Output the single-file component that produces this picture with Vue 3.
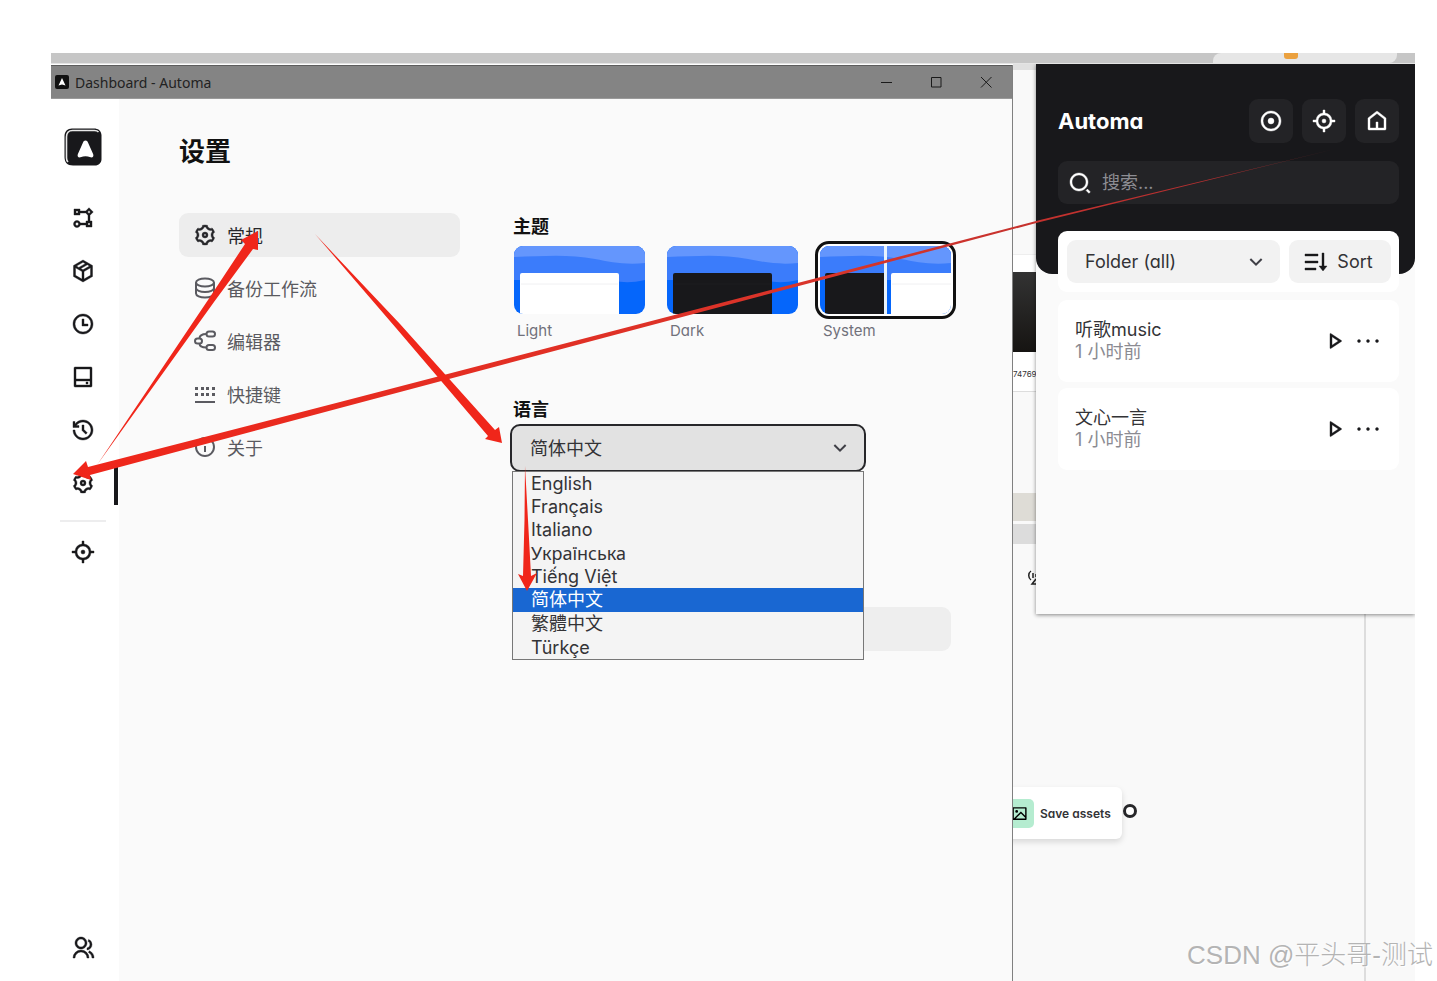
<script setup>
import { ref } from 'vue'

const icons = {
  flow: 'M6 21.5C4.067 21.5 2.5 19.933 2.5 18S4.067 14.5 6 14.5c1.585 0 2.924 1.054 3.355 2.5H15v-2h2V9.242L14.757 7H9v2H3V3h6v2h5.757L18 1.756 22.243 6 19 9.241V15h2v6h-6v-2H9.355c-.43 1.446-1.77 2.5-3.355 2.5zm0-5c-.828 0-1.5.672-1.5 1.5s.672 1.5 1.5 1.5 1.5-.672 1.5-1.5-.672-1.5-1.5-1.5zm13 .5h-2v2h2v-2zM18 4.586L16.586 6 18 7.414 19.414 6 18 4.586zM7 5H5v2h2V5z',
  box: 'M12 1l9.5 5.5v11L12 23l-9.5-5.5v-11L12 1zM5.494 7.078l2.3 1.33L14.3 4.64 12 3.311 5.494 7.078zM16.3 5.8L9.8 9.57l2.2 1.27 6.506-3.766L16.3 5.8zM4.5 8.813v7.534L11 20.11v-7.533L4.5 8.813zM13 20.11l6.5-3.763V8.81L13 12.577v7.533z',
  clock: 'M12 22C6.477 22 2 17.523 2 12S6.477 2 12 2s10 4.477 10 10-4.477 10-10 10zm0-2a8 8 0 1 0 0-16 8 8 0 0 0 0 16zm1-8h4v2h-6V7h2v5z',
  drive: 'M5 14h14V4H5v10zm0 2v4h14v-4H5zM4 2h16a1 1 0 0 1 1 1v18a1 1 0 0 1-1 1H4a1 1 0 0 1-1-1V3a1 1 0 0 1 1-1zm11 15h2v2h-2v-2z',
  history: 'M12 2c5.523 0 10 4.477 10 10s-4.477 10-10 10S2 17.523 2 12h2c0 4.418 3.582 8 8 8s8-3.582 8-8-3.582-8-8-8C9.25 4 6.824 5.387 5.385 7.5H8v2H2v-6h2V6c1.824-2.43 4.729-4 8-4zm1 5v4.585l3.243 3.243-1.415 1.415L11 12.413V7h2z',
  settings: 'M3.34 17a10.018 10.018 0 0 1-.978-2.326 3 3 0 0 0 .002-5.347A9.99 9.99 0 0 1 4.865 4.99a3 3 0 0 0 4.631-2.674 9.99 9.99 0 0 1 5.007.002 3 3 0 0 0 4.632 2.672c.579.59 1.093 1.261 1.525 2.01.433.749.757 1.53.978 2.326a3 3 0 0 0-.002 5.347 9.99 9.99 0 0 1-2.501 4.337 3 3 0 0 0-4.631 2.674 9.99 9.99 0 0 1-5.007-.002 3 3 0 0 0-4.632-2.672A10.018 10.018 0 0 1 3.34 17zm5.66.196a4.993 4.993 0 0 1 2.25 2.77c.499.047 1 .048 1.499.001A4.993 4.993 0 0 1 15 17.197a4.993 4.993 0 0 1 3.525-.565c.29-.408.54-.843.748-1.298A4.993 4.993 0 0 1 18 12c0-1.26.47-2.437 1.273-3.334a8.126 8.126 0 0 0-.75-1.298A4.993 4.993 0 0 1 15 6.804a4.993 4.993 0 0 1-2.25-2.77c-.499-.047-1-.048-1.499-.001A4.993 4.993 0 0 1 9 6.803a4.993 4.993 0 0 1-3.525.565 7.99 7.99 0 0 0-.748 1.298A4.993 4.993 0 0 1 6 12c0 1.26-.47 2.437-1.273 3.334a8.126 8.126 0 0 0 .75 1.298A4.993 4.993 0 0 1 9 17.196zM12 15a3 3 0 1 1 0-6 3 3 0 0 1 0 6zm0-2a1 1 0 1 0 0-2 1 1 0 0 0 0 2z',
  focus: 'M13 1l.001 3.062A8.004 8.004 0 0 1 19.938 11H23v2l-3.062.001a8.004 8.004 0 0 1-6.937 6.937L13 23h-2v-3.062a8.004 8.004 0 0 1-6.938-6.937L1 13v-2h3.062A8.004 8.004 0 0 1 11 4.062V1h2zm-1 5a6 6 0 1 0 0 12 6 6 0 0 0 0-12zm0 4a2 2 0 1 1 0 4 2 2 0 0 1 0-4z',
  group: 'M2 22a8 8 0 1 1 16 0h-2a6 6 0 1 0-12 0H2zm8-9c-3.315 0-6-2.685-6-6s2.685-6 6-6 6 2.685 6 6-2.685 6-6 6zm0-2c2.21 0 4-1.79 4-4s-1.79-4-4-4-4 1.79-4 4 1.79 4 4 4zm8.284 3.703A8.002 8.002 0 0 1 23 22h-2a6.001 6.001 0 0 0-3.537-5.473l.82-1.824zm-.688-11.29A5.5 5.5 0 0 1 21 8.5a5.499 5.499 0 0 1-5 5.478v-2.013a3.5 3.5 0 0 0 1.041-6.609l.555-1.943z',
  keyboard: 'M2 19h20v2H2v-2zm0-8h3v3H2v-3zm6 0h3v3H8v-3zM2 5h3v3H2V5zm11 0h3v3h-3V5zm6 0h3v3h-3V5zm-6 6h3v3h-3v-3zm6 0h3v3h-3v-3zM8 5h3v3H8V5z',
  info: 'M12 22C6.477 22 2 17.523 2 12S6.477 2 12 2s10 4.477 10 10-4.477 10-10 10zm0-2a8 8 0 1 0 0-16 8 8 0 0 0 0 16zM11 7h2v2h-2V7zm0 4h2v6h-2v-6z',
  record: 'M12 22C6.477 22 2 17.523 2 12S6.477 2 12 2s10 4.477 10 10-4.477 10-10 10zm0-2a8 8 0 1 0 0-16 8 8 0 0 0 0 16zm0-5a3 3 0 1 1 0-6 3 3 0 0 1 0 6z',
  home: 'M13 19h6V9.978l-7-5.444-7 5.444V19h6v-6h2v6zm8 1a1 1 0 0 1-1 1H4a1 1 0 0 1-1-1V9.49a1 1 0 0 1 .386-.79l8-6.222a1 1 0 0 1 1.228 0l8 6.222a1 1 0 0 1 .386.79V20z',
  search: 'M11 2c4.968 0 9 4.032 9 9s-4.032 9-9 9-9-4.032-9-9 4.032-9 9-9zm0 16c3.867 0 7-3.133 7-7 0-3.868-3.133-7-7-7-3.868 0-7 3.132-7 7 0 3.867 3.132 7 7 7zm8.485.071l2.829 2.828-1.415 1.415-2.828-2.829 1.414-1.414z',
  sort: 'M20 3v13h3l-4 5-4-5h3V3h2zm-8 15v2H1v-2h11zm2-7v2H1v-2h13zm0-7v2H1V4h13z',
  play: 'M16.394 12L10 7.737v8.526L16.394 12zm2.982.416L8.777 19.482A.5.5 0 0 1 8 19.066V4.934a.5.5 0 0 1 .777-.416l10.599 7.066a.5.5 0 0 1 0 .832z',
  more: 'M3 10.500a1.500 1.500 0 1 0 0 3 1.500 1.500 0 0 0 0-3zm9 0a1.500 1.500 0 1 0 0 3 1.500 1.500 0 0 0 0-3zm9 0a1.500 1.500 0 1 0 0 3 1.500 1.500 0 0 0 0-3z',
  arrowDown: 'M12 13.172l4.95-4.95 1.414 1.414L12 16 5.636 9.636 7.05 8.222z',
  image: 'M4.828 21l-.02.02-.021-.02H2.992A.993.993 0 0 1 2 20.007V3.993A1 1 0 0 1 2.992 3h18.016c.548 0 .992.445.992.993v16.014a1 1 0 0 1-.992.993H4.828zM20 15V5H4v14L14 9l6 6zm0 2.828l-6-6L6.828 19H20v-1.172zM8 11a2 2 0 1 1 0-4 2 2 0 0 1 0 4z'
}

const navs = [
  { id: 'workflows', icon: 'flow' },
  { id: 'packages', icon: 'box' },
  { id: 'schedule', icon: 'clock' },
  { id: 'storage', icon: 'drive' },
  { id: 'logs', icon: 'history' },
  { id: 'settings', icon: 'settings' }
]

const menus = [
  { id: 'general', name: '常规', icon: 'settings' },
  { id: 'backup', name: '备份工作流' },
  { id: 'editor', name: '编辑器' },
  { id: 'shortcuts', name: '快捷键', icon: 'keyboard' },
  { id: 'about', name: '关于', icon: 'info' }
]
const activeMenu = ref('general')

const themes = [
  { id: 'light', name: 'Light' },
  { id: 'dark', name: 'Dark' },
  { id: 'system', name: 'System' }
]
const theme = ref('system')

const languages = [
  { id: 'en', name: 'English' },
  { id: 'fr', name: 'Français' },
  { id: 'it', name: 'Italiano' },
  { id: 'uk', name: 'Українська' },
  { id: 'vi', name: 'Tiếng Việt' },
  { id: 'zh', name: '简体中文' },
  { id: 'zh-TW', name: '繁體中文' },
  { id: 'tr', name: 'Türkçe' }
]
const language = ref('zh')
const showList = ref(true)

let pickLanguage = (id) => {
  language.value = id
  showList.value = false
}

const folder = ref('all')
const query = ref('')
const workflows = [
  { name: '听歌music', time: '1 小时前' },
  { name: '文心一言', time: '1 小时前' }
]
</script>

<template>
  <div class="page">
    <div class="tabstrip">
      <div class="tab"><span class="favicon"></span></div>
    </div>
    <div class="desktop">
      <section class="window">
        <header class="titlebar">
          <svg class="title-logo" viewBox="0 0 14 14"><rect width="14" height="14" rx="2" fill="#111" /><path d="M7 3l3.500 7.500L7 9.500l-3.500 1z" fill="#fff" /></svg>
          <span class="title">Dashboard - Automa</span>
          <button class="win-btn" aria-label="minimize"><svg viewBox="0 0 12 12"><path d="M1 6.500h11" /></svg></button>
          <button class="win-btn" aria-label="maximize"><svg viewBox="0 0 12 12"><path d="M1.500 1.500h9.500v9.500h-9.500z" /></svg></button>
          <button class="win-btn" aria-label="close"><svg viewBox="0 0 12 12"><path d="M1 1l10.500 10.500M11.500 1L1 11.500" /></svg></button>
        </header>
        <div class="window-body">
          <aside class="sidebar">
            <svg class="logo" viewBox="0 0 38 38">
              <path d="M8 .5h22c4 0 7 2 7.500 6.500V31c0 4-3 6.500-6.500 6.500H9C3 37.500.5 34 .5 29V8C.5 3.500 3.500.5 8 .5z" fill="#18181b" />
              <path d="M4 34c-1-1-1.500-2-1.500-4V9c0-4 2-6.500 6-6.500h22c2 0 3 .5 4 1.500" fill="none" stroke="#e8e8e8" stroke-width="1.600" />
              <path d="M21.500 12.500c-1.300 0-2 .8-2.600 2.200l-5 11.300c-1 2.200.5 4 2.600 3.300 3.600-1.300 6.400-1.300 10 0 2.100.7 3.600-1.100 2.600-3.300l-5-11.300c-.6-1.400-1.300-2.200-2.600-2.200z" fill="#fff" />
            </svg>
            <nav class="navs">
              <a v-for="item in navs" :key="item.id" :href="'#/' + item.id" :aria-label="item.id" class="nav" :class="{ active: item.id === 'settings' }">
                <svg class="icon" viewBox="0 0 24 24"><path :d="icons[item.icon]" /></svg>
              </a>
            </nav>
            <hr class="divider">
            <button class="nav" aria-label="element selector">
              <svg class="icon" viewBox="0 0 24 24"><path :d="icons.focus" /></svg>
            </button>
            <a href="#/community" class="nav bottom" aria-label="community">
              <svg class="icon" viewBox="0 0 24 24"><path :d="icons.group" /></svg>
            </a>
          </aside>

          <main class="main">
            <h1>设置</h1>
            <div class="columns">
              <nav class="menu">
                <a v-for="item in menus" :key="item.id" :href="'#' + item.id" class="menu-item" :class="{ active: activeMenu === item.id }" @click="activeMenu = item.id">
                  <svg v-if="item.icon" class="icon" viewBox="0 0 24 24"><path :d="icons[item.icon]" /></svg>
                  <svg v-else-if="item.id === 'backup'" class="icon line" viewBox="0 0 24 24">
                    <ellipse cx="12" cy="6.500" rx="9" ry="4" />
                    <path d="M3 6.500v11c0 2.200 4 4 9 4s9-1.800 9-4v-11M3 12c0 2.200 4 4 9 4s9-1.800 9-4" />
                  </svg>
                  <svg v-else class="icon line" viewBox="0 0 24 24">
                    <rect x="13.500" y="2.500" width="8.500" height="5" rx="2.500" />
                    <rect x="2" y="9.500" width="7" height="5" rx="2.500" />
                    <rect x="13.500" y="16" width="8.500" height="5" rx="2.500" />
                    <path d="M13.500 5c-4 0-7 .5-7 4.500M6.500 14.500c0 3.500 3 4 7 4" />
                  </svg>
                  <span>{{ item.name }}</span>
                </a>
              </nav>

              <div class="content">
                <h2 id="theme-label">主题</h2>
                <div class="themes" role="radiogroup" aria-labelledby="theme-label">
                  <label v-for="item in themes" :key="item.id" class="theme">
                    <input v-model="theme" type="radio" name="theme" :value="item.id">
                    <span class="thumb">
                      <svg viewBox="0 0 131 68">
                        <rect width="131" height="68" fill="#0566fb" />
                        <path d="M0 0h131v34c-14 3-22 3-32 0H0z" fill="#3b7cfb" />
                        <path d="M0 0h131v17c-20 2-35-1-50-4C55 8 30 10 0 11z" fill="#6496fd" />
                        <g v-if="item.id !== 'system'">
                          <path d="M6 68V29q0-2 2-2h95q2 0 2 2v39z" :fill="item.id === 'dark' ? '#18181b' : '#fff'" />
                          <path d="M7 38h97" :stroke="item.id === 'dark' ? '#1c1c20' : '#f0f0f2'" />
                        </g>
                        <g v-else>
                          <path d="M5 68V29q0-2 2-2h57v41z" fill="#18181b" />
                          <path d="M71 68V29q0-2 2-2h58v41z" fill="#fff" />
                          <path d="M72 38h59" stroke="#f0f0f2" />
                          <rect x="64" width="3" height="68" fill="#e8f3fc" />
                        </g>
                      </svg>
                    </span>
                    <span class="theme-name">{{ item.name }}</span>
                  </label>
                </div>

                <h2 class="lang-title"><label for="language">语言</label></h2>
                <div class="lang">
                  <select id="language" v-model="language" @mousedown.prevent="showList = !showList">
                    <option v-for="item in languages" :key="item.id" :value="item.id">{{ item.name }}</option>
                  </select>
                  <svg class="caret" viewBox="0 0 24 24"><path :d="icons.arrowDown" /></svg>
                  <ul v-if="showList" class="lang-list" role="listbox">
                    <li v-for="item in languages" :key="item.id" role="option" :lang="item.id" :aria-selected="language === item.id" @click="pickLanguage(item.id)">{{ item.name }}</li>
                  </ul>
                </div>
                <div class="placeholder"></div>
              </div>
            </div>
          </main>
        </div>
      </section>

      <section class="editor">
        <!-- what is left of the workflow canvas behind the windows -->
        <div class="piece edge"></div>
        <div class="piece toolbar"></div>
        <div class="piece photo"></div>
        <div class="piece caption">74769</div>
        <div class="piece stripe"></div>
        <div class="piece stripe second"></div>
        <svg class="piece signal" viewBox="0 0 8 16"><path d="M3 1C0 3 0 8 3 10M5 3v5M8 4v3M8 9l-4 5h4" fill="none" stroke="#222" stroke-width="1.500" /></svg>
        <div class="piece guide"></div>
        <div class="node">
          <span class="node-icon"><svg viewBox="0 0 24 24"><path :d="icons.image" /></svg></span>
          <span>Save assets</span>
          <i class="handle"></i>
        </div>

        <div class="popup">
          <header class="popup-head">
            <div class="popup-row">
              <strong>Automa</strong>
              <button v-for="name in ['record', 'focus', 'home']" :key="name" class="dark-btn" :aria-label="name">
                <svg class="icon" viewBox="0 0 24 24"><path :d="icons[name]" /></svg>
              </button>
            </div>
            <label class="search">
              <svg class="icon" viewBox="0 0 24 24"><path :d="icons.search" /></svg>
              <input v-model="query" type="text" placeholder="搜索..." aria-label="搜索">
            </label>
          </header>
          <div class="popup-body">
            <div class="filters">
              <div class="folder">
                <select v-model="folder" aria-label="Folder">
                  <option value="all">Folder (all)</option>
                </select>
                <svg class="caret" viewBox="0 0 24 24"><path :d="icons.arrowDown" /></svg>
              </div>
              <button class="sort">
                <svg class="icon" viewBox="0 0 24 24"><path :d="icons.sort" /></svg>
                <span>Sort</span>
              </button>
            </div>
            <article v-for="item in workflows" :key="item.name" class="card">
              <div class="card-text">
                <p>{{ item.name }}</p>
                <p class="time">{{ item.time }}</p>
              </div>
              <button aria-label="run"><svg class="icon" viewBox="0 0 24 24"><path :d="icons.play" /></svg></button>
              <button aria-label="more"><svg class="icon" viewBox="0 0 24 24"><path :d="icons.more" /></svg></button>
            </article>
          </div>
        </div>
      </section>
    </div>

    <!-- red guide arrows -->
    <svg class="arrows">
      <defs>
        <linearGradient id="fade" gradientUnits="userSpaceOnUse" x1="73" y1="474" x2="1335" y2="149">
          <stop offset="0" stop-color="#f0261a" />
          <stop offset="0.600" stop-color="#d8352b" />
          <stop offset="0.900" stop-color="#b52f30" />
          <stop offset="1" stop-color="#702527" />
        </linearGradient>
      </defs>
      <path fill="url(#fade)" d="M73 474L86 461 88 467 340 402 1040 220 1335 149 1040 222 340 408 90 475 91 480z" />
      <path d="M258 231L241 240 245 244 208 300 97 465 214 302 253 249 258 250z" />
      <path d="M502 443L499 427 495 430 400 324 315 234 396 328 488 436 485 439z" />
      <path d="M527 591L518 574 523 576 524.500 520 525 466 528 520 531 576 537 573z" />
    </svg>
    <div class="watermark">CSDN @平头哥-测试</div>
  </div>
</template>

<style>
body {
  background: #fff;
}
</style>

<style scoped>
* {
  box-sizing: border-box;
}
.page {
  position: relative;
  display: flex;
  flex-direction: column;
  min-height: 100vh;
  padding: 53px 22px 0 51px;
  overflow: hidden;
  font-family: Inter, "Noto Sans CJK SC", sans-serif;
  font-feature-settings: "cv11";
  font-size: 18px;
  color: #333336;
}
h1, h2, p, ul {
  margin: 0;
  padding: 0;
}
button, select, input {
  font: inherit;
  font-feature-settings: inherit;
  color: inherit;
  border: 0;
  padding: 0;
  background: none;
}
a {
  color: inherit;
  text-decoration: none;
}
svg {
  display: block;
}
.icon {
  width: 24px;
  height: 24px;
  flex: none;
  fill: currentColor;
  stroke: currentColor;
  stroke-width: 0.400;
}
.icon.line {
  fill: none;
  stroke-width: 2;
}

.tabstrip {
  display: flex;
  justify-content: flex-end;
  height: 11px;
  background: #c6c6c6;
  border-bottom: 1px solid #e4e4e4;
}
.tab {
  width: 184px;
  margin-right: 18px;
  padding-left: 54px;
  border-radius: 8px 0 8px 0;
  background: #e6e6e6;
}
.favicon {
  display: block;
  width: 14px;
  height: 6px;
  margin-left: 17px;
  border-radius: 0 0 3px 3px;
  background: #eba13f;
}
.desktop {
  display: flex;
  flex: 1;
}

.window {
  display: flex;
  flex-direction: column;
  flex: 1;
  min-width: 0;
  margin-top: 1px;
  border-right: 1px solid #808080;
  background: #fafafa;
}
.titlebar {
  display: flex;
  align-items: center;
  height: 34px;
  padding: 0 1px 0 4px;
  background: #848484;
  border-top: 1px solid #5d5d5d;
  border-bottom: 1px solid #9a9a9a;
}
.title-logo {
  width: 14px;
  height: 14px;
}
.title {
  flex: 1;
  margin-left: 6px;
  font-family: "Noto Sans", "Noto Sans CJK SC", sans-serif;
  font-size: 14px;
  color: #222;
}
.win-btn {
  display: flex;
  align-items: center;
  justify-content: center;
  width: 50px;
  height: 32px;
}
.win-btn svg {
  width: 12px;
  height: 12px;
  fill: none;
  stroke: #1a1a1a;
}
.window-body {
  display: flex;
  flex: 1;
}
.sidebar {
  display: flex;
  flex-direction: column;
  flex: none;
  align-items: center;
  width: 68px;
  padding: 29px 4px 11px 0;
  background: #fff;
  color: #18181b;
}
.logo {
  width: 38px;
  height: 38px;
  margin-bottom: 30px;
}
.navs {
  display: flex;
  flex-direction: column;
  gap: 9px;
  width: 100%;
}
.nav {
  position: relative;
  display: flex;
  align-items: center;
  justify-content: center;
  width: 100%;
  height: 44px;
}
.nav.active::after {
  content: "";
  position: absolute;
  right: -3px;
  width: 4px;
  height: 44px;
  background: #18181b;
}
.nav.bottom {
  margin-top: auto;
}
.divider {
  width: 46px;
  height: 2px;
  margin: 15px 0 8px;
  border: 0;
  background: #ededee;
}

.main {
  flex: 1;
  min-width: 0;
  padding: 36px 61px 0 60px;
}
h1 {
  margin-bottom: 44px;
  font-size: 26px;
  line-height: 34px;
  color: #111;
}
.columns {
  display: flex;
  gap: 53px;
}
.menu {
  display: flex;
  flex-direction: column;
  flex: none;
  gap: 9px;
  width: 281px;
}
.menu-item {
  display: flex;
  align-items: center;
  gap: 10px;
  height: 44px;
  padding: 0 14px;
  border-radius: 9px;
  color: #5a5a60;
}
.menu-item.active {
  background: #ededed;
  color: #27272a;
}
.menu-item:not(.active) .icon:not(.line) {
  stroke: none;
}
.content {
  flex: 1;
  min-width: 0;
}
h2 {
  font-size: 18px;
  line-height: 28px;
  color: #111;
}
.themes {
  display: flex;
  gap: 12px;
  margin-left: -4px;
}
.theme {
  position: relative;
  flex: none;
  width: 141px;
}
.theme input {
  position: absolute;
  inset: 0;
  margin: 0;
  opacity: 0;
}
.thumb {
  display: block;
  padding: 2px;
  border: 3px solid transparent;
  border-radius: 14px;
}
.thumb svg {
  width: 100%;
  border-radius: 9px;
}
.theme input:checked + .thumb {
  border-color: #111;
  background: #fff;
}
.theme-name {
  display: block;
  padding-left: 8px;
  font-size: 15px;
  line-height: 24px;
  color: #71717a;
}
.lang-title {
  margin-top: 53px;
}
.lang {
  position: relative;
  width: 356px;
  margin-left: -3px;
}
.lang select {
  appearance: none;
  width: 100%;
  height: 48px;
  padding: 0 18px;
  border: 2px solid #27272a;
  border-radius: 10px;
  background: #e2e2e2;
  outline: 0;
}
.caret {
  position: absolute;
  top: 50%;
  right: 14px;
  width: 24px;
  height: 24px;
  margin-top: -12px;
  fill: #3f3f46;
  pointer-events: none;
}
.lang-list {
  position: absolute;
  top: 47px;
  left: 2px;
  right: 2px;
  border: 1px solid #777;
  background: #f4f4f4;
  list-style: none;
  font-feature-settings: normal;
}
.lang-list li {
  height: 23px;
  padding-left: 18px;
  line-height: 23px;
}
.lang-list li:lang(zh), .lang-list li:lang(uk) {
  height: 24px;
  line-height: 24px;
}
.lang-list li:lang(uk) {
  font-family: "Noto Sans", sans-serif;
}
.lang-list li[aria-selected="true"] {
  background: #1967d2;
  color: #fff;
}
.placeholder {
  height: 44px;
  margin-top: 135px;
  border-radius: 9px;
  background: #eee;
}

.editor {
  position: relative;
  flex: none;
  width: 402px;
  background: #f9f9f9;
  overflow: hidden;
}
.piece {
  position: absolute;
  left: 0;
}
.edge {
  top: 0;
  width: 100%;
  height: 6px;
  background: #e0e0e0;
}
.toolbar {
  top: 190px;
  width: 100%;
  height: 138px;
  border-top: 1px solid #eee;
  border-bottom: 1px solid #ddd;
  background: #fff;
}
.photo {
  top: 208px;
  width: 23px;
  height: 80px;
  background: linear-gradient(#333, #161412);
}
.caption {
  top: 304px;
  font-size: 8px;
  line-height: 12px;
}
.stripe {
  top: 429px;
  width: 23px;
  height: 28px;
  background: #dedcd6;
}
.stripe.second {
  top: 460px;
  height: 20px;
  background: #dcdcdc;
}
.signal {
  top: 506px;
  left: 15px;
  width: 8px;
  height: 16px;
}
.guide {
  top: 550px;
  bottom: 0;
  left: 351px;
  width: 2px;
  background: #ddd;
}
.node {
  position: absolute;
  top: 723px;
  left: -8px;
  display: flex;
  align-items: center;
  gap: 6px;
  width: 117px;
  height: 52px;
  border-radius: 6px;
  background: #fff;
  box-shadow: 0 3px 6px #0002;
  font-size: 12px;
  font-weight: 600;
  white-space: nowrap;
}
.node-icon {
  padding: 6px;
  border-radius: 5px;
  background: #b5ecd0;
}
.node-icon svg {
  width: 17px;
  height: 17px;
}
.handle {
  position: absolute;
  top: 17px;
  right: -15px;
  width: 14px;
  height: 14px;
  border: 3px solid #27272a;
  border-radius: 50%;
  background: #fff;
}

.popup {
  position: absolute;
  top: 0;
  left: 23px;
  right: 0;
  height: 550px;
  background: #fafafa;
  box-shadow: 0 1px 4px #0007;
}
.popup-head {
  padding: 35px 16px 70px 22px;
  border-radius: 0 0 16px 16px;
  background: #18181b;
  color: #fff;
}
.popup-row {
  display: flex;
  align-items: center;
  gap: 9px;
  margin-bottom: 18px;
}
.popup-row strong {
  flex: 1;
  font-size: 22px;
}
.dark-btn {
  display: flex;
  align-items: center;
  justify-content: center;
  width: 44px;
  height: 44px;
  border-radius: 9px;
  background: #232326;
}
.search {
  display: flex;
  align-items: center;
  gap: 10px;
  height: 43px;
  padding: 0 10px;
  border-radius: 9px;
  background: #232326;
}
.search input {
  flex: 1;
  min-width: 0;
  outline: 0;
}
.search input::placeholder {
  color: #8d8d93;
}
.popup-body {
  display: flex;
  flex-direction: column;
  gap: 6px;
  margin-top: -43px;
  padding: 0 16px 0 22px;
}
.filters {
  display: flex;
  gap: 9px;
  margin-bottom: 2px;
  padding: 9px 8px 9px 9px;
  border-radius: 9px;
  background: #fff;
}
.folder {
  position: relative;
  flex: 1;
}
.folder select {
  appearance: none;
  width: 100%;
  height: 43px;
  padding: 0 18px;
  border-radius: 9px;
  background: #f2f2f2;
}
.folder .caret {
  right: 12px;
}
.sort {
  display: flex;
  align-items: center;
  justify-content: center;
  gap: 9px;
  width: 102px;
  padding-right: 3px;
  border-radius: 9px;
  background: #f2f2f2;
}
.sort .icon {
  color: #18181b;
}
.card {
  display: flex;
  align-items: center;
  gap: 10px;
  height: 82px;
  padding: 0 19px 0 17px;
  border-radius: 9px;
  background: #fff;
}
.card .icon {
  color: #18181b;
}
.card-text {
  flex: 1;
  line-height: 22px;
}
.time {
  color: #8b8b92;
}

.arrows {
  position: absolute;
  inset: 0;
  width: 100%;
  height: 100%;
  fill: #f0261a;
  pointer-events: none;
}
.watermark {
  position: absolute;
  right: 4px;
  bottom: 6px;
  font-family: "Liberation Sans", "Noto Sans CJK SC", sans-serif;
  font-size: 26px;
  font-weight: 300;
  line-height: 40px;
  color: #b4b4b4;
  text-shadow: 1px 1px 1px #fff;
}
</style>
